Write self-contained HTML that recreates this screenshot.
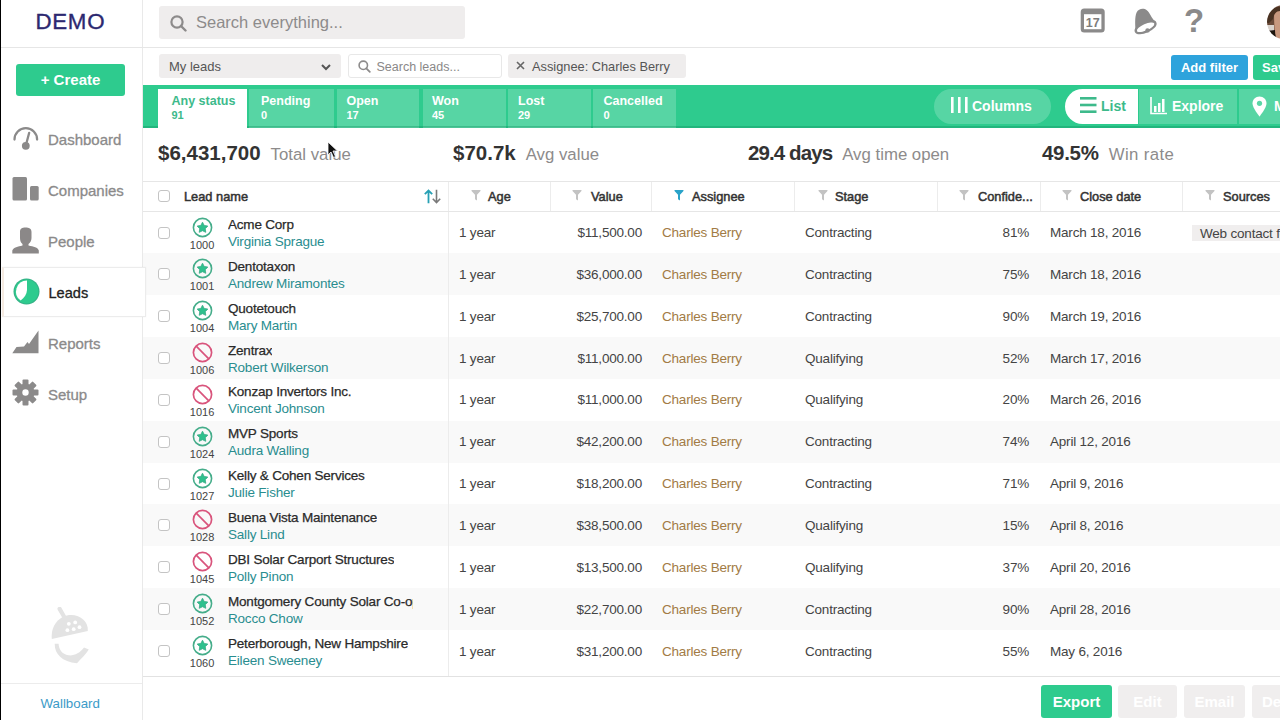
<!DOCTYPE html>
<html><head><meta charset="utf-8"><style>
*{box-sizing:border-box;margin:0;padding:0}
html,body{width:1280px;height:720px;overflow:hidden;background:#fff;font-family:"Liberation Sans",sans-serif;color:#333}
.abs{position:absolute}
#edge{position:absolute;left:0;top:0;width:1.3px;height:720px;background:#000;z-index:10}
#side{position:absolute;left:0;top:0;width:143px;height:720px;border-right:1px solid #e9e9e9;background:#fff;z-index:5}
#hline{position:absolute;left:0;top:47px;width:1280px;height:1px;background:#e6e6e6;z-index:6}
.demo{position:absolute;left:35.5px;top:8.5px;font-size:22.3px;color:#2c2870;letter-spacing:0.7px;-webkit-text-stroke:0.35px #2c2870}
.create{position:absolute;left:16px;top:64px;width:109px;height:32px;background:#2ecb8e;border-radius:3px;color:#fff;font-weight:700;font-size:15px;text-align:center;line-height:32px}
.nav{position:absolute;left:0;width:143px;height:50px}
.nav .t{position:absolute;left:48px;font-size:15px;color:#8b8a8a;-webkit-text-stroke:0.3px #8b8a8a}
.nav svg{position:absolute;left:12px}
.nav.active{left:1.5px;width:144.5px;background:#fff;border:1px solid #ececec;border-left:2px solid #f5ebe2;box-shadow:0 0 2px rgba(0,0,0,0.04)}
.wall{position:absolute;left:40.5px;top:696px;font-size:13.3px;color:#3b9bc8}
.search{position:absolute;left:159px;top:6px;width:306px;height:33px;background:#efeded;border-radius:3px}
.search .t{position:absolute;left:37px;top:7px;font-size:16.5px;color:#8d8b8b}
.ddl{position:absolute;left:159px;top:54.3px;width:182px;height:23.5px;background:#efeded;border-radius:3px}
.ddl .t{position:absolute;left:10px;top:4.5px;font-size:13px;color:#555}
.sl{position:absolute;left:347.5px;top:54.3px;width:154.5px;height:23.5px;background:#fff;border:1px solid #e8e8e8;border-radius:3px}
.sl .t{position:absolute;left:28px;top:4.5px;font-size:12.5px;color:#8a8888}
.chip{position:absolute;left:508px;top:54.3px;width:178px;height:23.5px;background:#efeded;border-radius:3px}
.chip .t{position:absolute;left:24px;top:4.5px;font-size:12.8px;color:#555}
.btn{position:absolute;top:55px;height:25px;border-radius:3px;color:#fff;font-weight:700;font-size:13px;line-height:25px;text-align:center}
#tabbar{position:absolute;left:143px;top:85px;width:1137px;height:42.5px;background:#2ecb8e;box-shadow:inset 0 -1.2px 0 #22b67e}
.tab{position:absolute;top:4px;height:38.5px;background:rgba(255,255,255,0.2);color:#fff;font-weight:700}
.tab .a{position:absolute;left:13.5px;top:5px;font-size:12.5px}
.tab .b{position:absolute;left:13.5px;top:20px;font-size:11px}
.tab.on{background:#fff;color:#3dba8b;z-index:2}
.tbl{position:absolute;left:0;top:41.3px;width:1137px;height:1.2px;background:rgba(20,150,100,0.35);z-index:1}
.pill{position:absolute;top:4px;height:35px;background:rgba(255,255,255,0.2);color:#fff;font-weight:700;font-size:14px}
.stat{position:absolute;top:141px;white-space:nowrap}
.stat b{font-size:20.5px;color:#333;font-weight:700}
.stat span{font-size:16.8px;color:#8d8b8b;margin-left:10px}
#thead{position:absolute;left:143px;top:181px;width:1137px;height:31px;border-top:1px solid #e6e6e6;border-bottom:1px solid #e6e6e6;background:#fff}
.th{position:absolute;top:0;height:29px;border-left:1px solid #ececec;font-size:12.8px;font-weight:400;color:#333;-webkit-text-stroke:0.5px #333}
.th .t{position:absolute;top:6.7px}
.th svg{position:absolute;top:9px}
#tbody{position:absolute;left:143px;top:0;width:1137px;height:676px;overflow:hidden}
.row{position:absolute;left:0;width:1137px;height:41.85px}
.cb{position:absolute;left:15.3px;width:12px;height:12px;border:1px solid #c4c4c4;border-radius:3px;background:#fff}
.icw{position:absolute;left:48.6px;top:5px;width:26px;text-align:center}
.icw .ic{position:absolute;left:0;top:0}
.num{position:absolute;left:-3px;top:22px;width:27px;text-align:center;font-size:11px;color:#444}
.lname{position:absolute;left:85px;top:5.5px;font-size:13.5px;letter-spacing:-0.2px;color:#2a2a2a;-webkit-text-stroke:0.25px #2a2a2a;white-space:nowrap;max-width:185px;overflow:hidden}
.pname{position:absolute;left:85px;top:22.5px;font-size:13.5px;letter-spacing:-0.2px;color:#298d8f;white-space:nowrap}
.vdiv{position:absolute;left:305px;top:0;width:1px;height:42px;background:#ececec}
.c{position:absolute;top:13.5px;font-size:13.5px;letter-spacing:-0.2px;color:#444;white-space:nowrap}
.age{left:316px}
.val{left:400px;width:99px;text-align:right}
.asg{left:519px;color:#a27b45}
.stg{left:662px}
.conf{left:800px;width:86px;text-align:right}
.cd{left:907px}
.src{left:1049px;top:13px}
.srcchip{display:inline-block;background:#f0eeee;padding:1px 8px;font-size:13.5px;letter-spacing:-0.2px;color:#444;height:16px;line-height:15px}
#bline{position:absolute;left:140px;top:675.5px;width:1140px;height:1.5px;background:#e2e2e2}
.bb{position:absolute;top:685px;height:33px;border-radius:3px;font-weight:700;font-size:15px;line-height:33px;text-align:center;color:#fff}
</style></head><body>
<div id="side">
  <div class="demo">DEMO</div>
  <div class="create">+ Create</div>
  <div class="nav" style="top:115px">
    <svg width="28" height="26" viewBox="0 0 28 26" style="top:11px"><path d="M2.5 13.5 A11.3 11.3 0 0 1 25.1 13.5" fill="none" stroke="#8b8a8a" stroke-width="2.3" stroke-linecap="round"/><path d="M17.2 6.8 L13.8 19.5" stroke="#8b8a8a" stroke-width="2.3" stroke-linecap="round"/><circle cx="13.8" cy="19.8" r="3.9" fill="#8b8a8a"/></svg>
    <div class="t" style="top:16px">Dashboard</div>
  </div>
  <div class="nav" style="top:166px">
    <svg width="28" height="26" viewBox="0 0 28 26" style="top:11px"><rect x="0.5" y="0" width="14.5" height="23.5" rx="1.5" fill="#8b8a8a"/><rect x="18" y="9" width="8.7" height="14.5" rx="1.5" fill="#8b8a8a"/></svg>
    <div class="t" style="top:16px">Companies</div>
  </div>
  <div class="nav" style="top:217px">
    <svg width="28" height="28" viewBox="0 0 28 28" style="top:9.5px"><path d="M8 5 C8 1.5 10 0.5 13.5 0.5 C17 0.5 19.5 1.5 19.5 5 L19.5 11 C19.5 14 18 16 16.5 17 L16.5 18.5 C21.5 19.5 26 20.5 26.8 23.5 L26.8 26.5 L0.3 26.5 L0.3 23.5 C1.5 20.5 6 19.5 10.5 18.5 L10.5 17 C9 16 8 14 8 11 Z" fill="#8b8888"/></svg>
    <div class="t" style="top:15.5px">People</div>
  </div>
  <div class="nav active" style="top:267px;height:50px">
    <svg width="28" height="28" viewBox="0 0 28 28" style="top:10px;left:9px"><circle cx="13.5" cy="13.5" r="13" fill="#35b186"/><circle cx="13.5" cy="13.5" r="11.9" fill="#2ecb8e"/><path d="M14 2.6 L14 12 C13.8 16 11.5 19.8 7.6 22.5 A11 11 0 0 1 14 2.6 Z" fill="#fff"/></svg>
    <div class="t" style="top:16.5px;left:45px;font-size:14.6px;color:#222;-webkit-text-stroke:0.3px #222">Leads</div>
  </div>
  <div class="nav" style="top:318px">
    <svg width="28" height="26" viewBox="0 0 28 26" style="top:12px;left:12px"><path d="M0.3 23.3 L4.5 17 L12 16.5 L15.5 12 L17 14 L26.5 0.5 L26.5 23.3 Z" fill="#8b8a8a"/></svg>
    <div class="t" style="top:17px">Reports</div>
  </div>
  <div class="nav" style="top:369px">
    <svg width="28" height="28" viewBox="0 0 28 28" style="top:10px"><g transform="translate(13.5,13.5)" fill="#8b8a8a"><circle r="9"/><rect x="-3" y="-13" width="6" height="6" rx="1"/><rect x="-3" y="7" width="6" height="6" rx="1"/><rect x="-13" y="-3" width="6" height="6" rx="1"/><rect x="7" y="-3" width="6" height="6" rx="1"/><g transform="rotate(45)"><rect x="-3" y="-13" width="6" height="6" rx="1"/><rect x="-3" y="7" width="6" height="6" rx="1"/><rect x="-13" y="-3" width="6" height="6" rx="1"/><rect x="7" y="-3" width="6" height="6" rx="1"/></g></g><circle cx="13.5" cy="13.5" r="3.2" fill="#fff"/></svg>
    <div class="t" style="top:17px">Setup</div>
  </div>
  <svg class="abs" style="left:50px;top:607px" width="40" height="58" viewBox="0 0 40 58"><path d="M9.6 1.9 L14 9.5" stroke="#e3e3e3" stroke-width="4.2" stroke-linecap="round"/><path d="M1.8 32 C0.5 18 10 8 21 8 C31 8 38.5 15 37.8 24 Z" fill="#e3e3e3"/><g fill="#fff"><circle cx="18.8" cy="16.8" r="1.9"/><circle cx="25.2" cy="15.4" r="1.9"/><circle cx="29.5" cy="20.2" r="1.9"/><circle cx="17.4" cy="23.2" r="1.9"/><circle cx="23.7" cy="22.2" r="1.9"/></g><path d="M4.7 36.8 C4.5 47 12 55 27 56.2 C31 52 36 47 38.8 42.6 L34 40.5 C30 46 24 49 18.5 48.3 C12 47.5 8.8 42 8.6 36.8 Z" fill="#e3e3e3"/></svg>
  <div class="abs" style="left:0;top:683px;width:142px;height:1px;background:#ececec"></div>
  <div class="wall">Wallboard</div>
</div>
<div id="edge"></div>
<div id="hline"></div>

<div class="search">
  <svg class="abs" style="left:11px;top:9px" width="17" height="17" viewBox="0 0 17 17"><circle cx="7" cy="7" r="5.6" fill="none" stroke="#8d8b8b" stroke-width="2.2"/><path d="M11 11 L15.5 15.5" stroke="#8d8b8b" stroke-width="2.4" stroke-linecap="round"/></svg>
  <div class="t">Search everything...</div>
</div>
<svg class="abs" style="left:1080px;top:8px" width="26" height="26" viewBox="0 0 26 26"><rect x="0.7" y="0.5" width="24" height="24" rx="3.5" fill="#8b8a8a"/><rect x="4" y="6.2" width="17.4" height="15" fill="#fff"/><text x="12.8" y="18.9" font-family="Liberation Sans" font-size="12.5" font-weight="700" fill="#7d7c7c" text-anchor="middle">17</text></svg>
<svg class="abs" style="left:1125px;top:4px" width="40" height="34" viewBox="0 0 40 34"><path d="M10.6 27.5 C10.2 21 9.6 13 11.6 8.6 C13.6 4.5 18.5 3.8 21.8 6.2 C25 8.6 26.2 14 30.6 18 Z" fill="#8b8a8a"/><ellipse cx="20.6" cy="23.2" rx="10.6" ry="4.4" transform="rotate(-24 20.6 23.2)" fill="none" stroke="#8b8a8a" stroke-width="2.4"/><ellipse cx="20.6" cy="23.2" rx="9.4" ry="3.2" transform="rotate(-24 20.6 23.2)" fill="#fff"/><circle cx="22.5" cy="26.4" r="2.2" fill="#8b8a8a"/></svg>
<div class="abs" style="left:1184px;top:3px;font-size:33px;font-weight:700;color:#8b8a8a;line-height:36px">?</div>
<svg class="abs" style="left:1266px;top:5px" width="14" height="34" viewBox="0 0 14 34"><defs><clipPath id="av"><circle cx="18" cy="17" r="17"/></clipPath><filter id="bl"><feGaussianBlur stdDeviation="0.7"/></filter></defs><g clip-path="url(#av)"><g filter="url(#bl)"><rect x="0" y="0" width="14" height="34" fill="#6a4a38"/><path d="M8 6 C10 5 13 5 14 5 L14 34 L9 34 C9 28 8 20 8 6 Z" fill="#c8987e"/><path d="M0 20 L8 20 L8 26 L0 26 Z" fill="#d9d2cc"/><path d="M0 26 L9 25 C9 30 10 33 12 34 L0 34 Z" fill="#1e1410"/><path d="M0 6 C3 3 8 2 14 2 L14 6 C10 6 8 9 7 14 L3 18 L0 18 Z" fill="#4a3020"/></g></g></svg>
<div class="ddl"><div class="t">My leads</div><svg class="abs" style="left:161.5px;top:9.5px" width="10" height="7" viewBox="0 0 10 7"><path d="M1 1 L5 5 L9 1" fill="none" stroke="#555" stroke-width="2"/></svg></div>
<div class="sl"><svg class="abs" style="left:9px;top:5px" width="13" height="13" viewBox="0 0 13 13"><circle cx="5.3" cy="5.3" r="4.2" fill="none" stroke="#8d8b8b" stroke-width="1.6"/><path d="M8.3 8.3 L11.8 11.8" stroke="#8d8b8b" stroke-width="1.8" stroke-linecap="round"/></svg><div class="t">Search leads...</div></div>
<div class="chip"><svg class="abs" style="left:8px;top:7px" width="9" height="9" viewBox="0 0 9 9"><path d="M1 1 L8 8 M8 1 L1 8" stroke="#666" stroke-width="1.6"/></svg><div class="t">Assignee: Charles Berry</div></div>
<div class="btn" style="left:1171px;width:77px;background:#2ea3dc">Add filter</div>
<div class="btn" style="left:1253px;width:60px;background:#2ecb8e;text-align:left;padding-left:9px">Save</div>

<div id="tabbar">
  <div class="tbl"></div><div class="tab on" style="left:15px;width:89px"><div class="a">Any status</div><div class="b">91</div></div>
  <div class="tab" style="left:105.5px;width:85px"><div class="a" style="left:12.5px">Pending</div><div class="b" style="left:12.5px">0</div></div>
  <div class="tab" style="left:193.5px;width:82.5px"><div class="a" style="left:10px">Open</div><div class="b" style="left:10px">17</div></div>
  <div class="tab" style="left:279.5px;width:83px"><div class="a" style="left:9.5px">Won</div><div class="b" style="left:9.5px">45</div></div>
  <div class="tab" style="left:365px;width:82.5px"><div class="a" style="left:10px">Lost</div><div class="b" style="left:10px">29</div></div>
  <div class="tab" style="left:450px;width:83px"><div class="a" style="left:10.5px">Cancelled</div><div class="b" style="left:10.5px">0</div></div>
  <div class="pill" style="left:791px;width:117px;border-radius:18px">
    <svg class="abs" style="left:17px;top:8px" width="17" height="16" viewBox="0 0 17 16"><rect x="0" y="0" width="2.6" height="16" fill="#fff"/><rect x="7" y="0" width="2.6" height="16" fill="#fff"/><rect x="14" y="0" width="2.6" height="16" fill="#fff"/></svg>
    <div class="abs" style="left:38px;top:9px">Columns</div>
  </div>
  <div class="pill" style="left:922px;width:73px;border-radius:18px 0 0 18px;background:#fff;color:#3dba8b">
    <svg class="abs" style="left:15px;top:8px" width="17" height="16" viewBox="0 0 17 16"><rect x="0" y="0" width="16.5" height="2.6" fill="#3dba8b"/><rect x="0" y="6.7" width="16.5" height="2.6" fill="#3dba8b"/><rect x="0" y="13.4" width="16.5" height="2.6" fill="#3dba8b"/></svg>
    <div class="abs" style="left:36px;top:9px">List</div>
  </div>
  <div class="pill" style="left:996px;width:98px;border-radius:0">
    <svg class="abs" style="left:11px;top:8px" width="18" height="18" viewBox="0 0 18 18"><path d="M1 0 V16.5 H17" fill="none" stroke="#fff" stroke-width="1.6"/><rect x="4" y="9" width="2.5" height="6" fill="#fff"/><rect x="8" y="6" width="2.5" height="9" fill="#fff"/><rect x="12" y="2" width="2.5" height="13" fill="#fff"/></svg>
    <div class="abs" style="left:33px;top:9px">Explore</div>
  </div>
  <div class="pill" style="left:1096px;width:60px;border-radius:0">
    <svg class="abs" style="left:13px;top:7px" width="15" height="21" viewBox="0 0 15 21"><path d="M7.5 0.5 C3.5 0.5 0.5 3.5 0.5 7.5 C0.5 12 7.5 20.5 7.5 20.5 C7.5 20.5 14.5 12 14.5 7.5 C14.5 3.5 11.5 0.5 7.5 0.5 Z" fill="#fff"/><circle cx="7.5" cy="7.3" r="2.6" fill="#5ad6a6"/></svg>
    <div class="abs" style="left:35px;top:9px">Map</div>
  </div>
</div>

<div class="stat" style="left:158px"><b>$6,431,700</b><span>Total value</span></div>
<div class="stat" style="left:453px"><b>$70.7k</b><span>Avg value</span></div>
<div class="stat" style="left:748px"><b style="letter-spacing:-0.9px">29.4 days</b><span>Avg time open</span></div>
<div class="stat" style="left:1042px"><b style="letter-spacing:-0.3px">49.5%</b><span style="letter-spacing:0.4px">Win rate</span></div>
<svg class="abs" style="left:327px;top:141px" width="12" height="18" viewBox="0 0 12 18"><path d="M1 1 L1 14 L4 11 L6.5 16.5 L8.5 15.5 L6 10 L10.5 10 Z" fill="#111" stroke="#fff" stroke-width="0.8"/></svg>

<div id="tbody">
<div class="row" style="top:211.50px;background:#ffffff">
<div class="cb" style="top:15px"></div>
<div class="icw"><svg class="ic" width="21" height="21" viewBox="0 0 21 21"><circle cx="10.5" cy="10.5" r="9.1" fill="none" stroke="#45ad8a" stroke-width="1.6"/><path d="M10.50 5.20 L12.20 8.45 L15.83 9.07 L13.26 11.70 L13.79 15.33 L10.50 13.70 L7.21 15.33 L7.74 11.70 L5.17 9.07 L8.80 8.45 Z" fill="#2fc08d" stroke="#38a985" stroke-width="0.8" stroke-linejoin="round"/></svg><div class="num">1000</div></div>
<div class="lname">Acme Corp</div><div class="pname">Virginia Sprague</div>
<div class="c age">1 year</div>
<div class="c val">$11,500.00</div>
<div class="c asg">Charles Berry</div>
<div class="c stg">Contracting</div>
<div class="c conf">81%</div>
<div class="c cd">March 18, 2016</div>
<div class="c src"><span class="srcchip">Web contact form</span></div>
</div><div class="row" style="top:253.35px;background:#f9f9f9">
<div class="cb" style="top:15px"></div>
<div class="icw"><svg class="ic" width="21" height="21" viewBox="0 0 21 21"><circle cx="10.5" cy="10.5" r="9.1" fill="none" stroke="#45ad8a" stroke-width="1.6"/><path d="M10.50 5.20 L12.20 8.45 L15.83 9.07 L13.26 11.70 L13.79 15.33 L10.50 13.70 L7.21 15.33 L7.74 11.70 L5.17 9.07 L8.80 8.45 Z" fill="#2fc08d" stroke="#38a985" stroke-width="0.8" stroke-linejoin="round"/></svg><div class="num">1001</div></div>
<div class="lname">Dentotaxon</div><div class="pname">Andrew Miramontes</div>
<div class="c age">1 year</div>
<div class="c val">$36,000.00</div>
<div class="c asg">Charles Berry</div>
<div class="c stg">Contracting</div>
<div class="c conf">75%</div>
<div class="c cd">March 18, 2016</div>
<div class="c src"></div>
</div><div class="row" style="top:295.20px;background:#ffffff">
<div class="cb" style="top:15px"></div>
<div class="icw"><svg class="ic" width="21" height="21" viewBox="0 0 21 21"><circle cx="10.5" cy="10.5" r="9.1" fill="none" stroke="#45ad8a" stroke-width="1.6"/><path d="M10.50 5.20 L12.20 8.45 L15.83 9.07 L13.26 11.70 L13.79 15.33 L10.50 13.70 L7.21 15.33 L7.74 11.70 L5.17 9.07 L8.80 8.45 Z" fill="#2fc08d" stroke="#38a985" stroke-width="0.8" stroke-linejoin="round"/></svg><div class="num">1004</div></div>
<div class="lname">Quotetouch</div><div class="pname">Mary Martin</div>
<div class="c age">1 year</div>
<div class="c val">$25,700.00</div>
<div class="c asg">Charles Berry</div>
<div class="c stg">Contracting</div>
<div class="c conf">90%</div>
<div class="c cd">March 19, 2016</div>
<div class="c src"></div>
</div><div class="row" style="top:337.05px;background:#f9f9f9">
<div class="cb" style="top:15px"></div>
<div class="icw"><svg class="ic" width="21" height="21" viewBox="0 0 21 21"><circle cx="10.5" cy="10.5" r="9.1" fill="none" stroke="#d9547c" stroke-width="1.7"/><line x1="4.2" y1="4.2" x2="16.8" y2="16.8" stroke="#d9547c" stroke-width="1.7"/></svg><div class="num">1006</div></div>
<div class="lname">Zentrax</div><div class="pname">Robert Wilkerson</div>
<div class="c age">1 year</div>
<div class="c val">$11,000.00</div>
<div class="c asg">Charles Berry</div>
<div class="c stg">Qualifying</div>
<div class="c conf">52%</div>
<div class="c cd">March 17, 2016</div>
<div class="c src"></div>
</div><div class="row" style="top:378.90px;background:#ffffff">
<div class="cb" style="top:15px"></div>
<div class="icw"><svg class="ic" width="21" height="21" viewBox="0 0 21 21"><circle cx="10.5" cy="10.5" r="9.1" fill="none" stroke="#d9547c" stroke-width="1.7"/><line x1="4.2" y1="4.2" x2="16.8" y2="16.8" stroke="#d9547c" stroke-width="1.7"/></svg><div class="num">1016</div></div>
<div class="lname">Konzap Invertors Inc.</div><div class="pname">Vincent Johnson</div>
<div class="c age">1 year</div>
<div class="c val">$11,000.00</div>
<div class="c asg">Charles Berry</div>
<div class="c stg">Qualifying</div>
<div class="c conf">20%</div>
<div class="c cd">March 26, 2016</div>
<div class="c src"></div>
</div><div class="row" style="top:420.75px;background:#f9f9f9">
<div class="cb" style="top:15px"></div>
<div class="icw"><svg class="ic" width="21" height="21" viewBox="0 0 21 21"><circle cx="10.5" cy="10.5" r="9.1" fill="none" stroke="#45ad8a" stroke-width="1.6"/><path d="M10.50 5.20 L12.20 8.45 L15.83 9.07 L13.26 11.70 L13.79 15.33 L10.50 13.70 L7.21 15.33 L7.74 11.70 L5.17 9.07 L8.80 8.45 Z" fill="#2fc08d" stroke="#38a985" stroke-width="0.8" stroke-linejoin="round"/></svg><div class="num">1024</div></div>
<div class="lname">MVP Sports</div><div class="pname">Audra Walling</div>
<div class="c age">1 year</div>
<div class="c val">$42,200.00</div>
<div class="c asg">Charles Berry</div>
<div class="c stg">Contracting</div>
<div class="c conf">74%</div>
<div class="c cd">April 12, 2016</div>
<div class="c src"></div>
</div><div class="row" style="top:462.60px;background:#ffffff">
<div class="cb" style="top:15px"></div>
<div class="icw"><svg class="ic" width="21" height="21" viewBox="0 0 21 21"><circle cx="10.5" cy="10.5" r="9.1" fill="none" stroke="#45ad8a" stroke-width="1.6"/><path d="M10.50 5.20 L12.20 8.45 L15.83 9.07 L13.26 11.70 L13.79 15.33 L10.50 13.70 L7.21 15.33 L7.74 11.70 L5.17 9.07 L8.80 8.45 Z" fill="#2fc08d" stroke="#38a985" stroke-width="0.8" stroke-linejoin="round"/></svg><div class="num">1027</div></div>
<div class="lname">Kelly &amp; Cohen Services</div><div class="pname">Julie Fisher</div>
<div class="c age">1 year</div>
<div class="c val">$18,200.00</div>
<div class="c asg">Charles Berry</div>
<div class="c stg">Contracting</div>
<div class="c conf">71%</div>
<div class="c cd">April 9, 2016</div>
<div class="c src"></div>
</div><div class="row" style="top:504.45px;background:#f9f9f9">
<div class="cb" style="top:15px"></div>
<div class="icw"><svg class="ic" width="21" height="21" viewBox="0 0 21 21"><circle cx="10.5" cy="10.5" r="9.1" fill="none" stroke="#d9547c" stroke-width="1.7"/><line x1="4.2" y1="4.2" x2="16.8" y2="16.8" stroke="#d9547c" stroke-width="1.7"/></svg><div class="num">1028</div></div>
<div class="lname">Buena Vista Maintenance</div><div class="pname">Sally Lind</div>
<div class="c age">1 year</div>
<div class="c val">$38,500.00</div>
<div class="c asg">Charles Berry</div>
<div class="c stg">Qualifying</div>
<div class="c conf">15%</div>
<div class="c cd">April 8, 2016</div>
<div class="c src"></div>
</div><div class="row" style="top:546.30px;background:#ffffff">
<div class="cb" style="top:15px"></div>
<div class="icw"><svg class="ic" width="21" height="21" viewBox="0 0 21 21"><circle cx="10.5" cy="10.5" r="9.1" fill="none" stroke="#d9547c" stroke-width="1.7"/><line x1="4.2" y1="4.2" x2="16.8" y2="16.8" stroke="#d9547c" stroke-width="1.7"/></svg><div class="num">1045</div></div>
<div class="lname">DBI Solar Carport Structures</div><div class="pname">Polly Pinon</div>
<div class="c age">1 year</div>
<div class="c val">$13,500.00</div>
<div class="c asg">Charles Berry</div>
<div class="c stg">Qualifying</div>
<div class="c conf">37%</div>
<div class="c cd">April 20, 2016</div>
<div class="c src"></div>
</div><div class="row" style="top:588.15px;background:#f9f9f9">
<div class="cb" style="top:15px"></div>
<div class="icw"><svg class="ic" width="21" height="21" viewBox="0 0 21 21"><circle cx="10.5" cy="10.5" r="9.1" fill="none" stroke="#45ad8a" stroke-width="1.6"/><path d="M10.50 5.20 L12.20 8.45 L15.83 9.07 L13.26 11.70 L13.79 15.33 L10.50 13.70 L7.21 15.33 L7.74 11.70 L5.17 9.07 L8.80 8.45 Z" fill="#2fc08d" stroke="#38a985" stroke-width="0.8" stroke-linejoin="round"/></svg><div class="num">1052</div></div>
<div class="lname">Montgomery County Solar Co-op</div><div class="pname">Rocco Chow</div>
<div class="c age">1 year</div>
<div class="c val">$22,700.00</div>
<div class="c asg">Charles Berry</div>
<div class="c stg">Contracting</div>
<div class="c conf">90%</div>
<div class="c cd">April 28, 2016</div>
<div class="c src"></div>
</div><div class="row" style="top:630.00px;background:#ffffff">
<div class="cb" style="top:15px"></div>
<div class="icw"><svg class="ic" width="21" height="21" viewBox="0 0 21 21"><circle cx="10.5" cy="10.5" r="9.1" fill="none" stroke="#45ad8a" stroke-width="1.6"/><path d="M10.50 5.20 L12.20 8.45 L15.83 9.07 L13.26 11.70 L13.79 15.33 L10.50 13.70 L7.21 15.33 L7.74 11.70 L5.17 9.07 L8.80 8.45 Z" fill="#2fc08d" stroke="#38a985" stroke-width="0.8" stroke-linejoin="round"/></svg><div class="num">1060</div></div>
<div class="lname">Peterborough, New Hampshire</div><div class="pname">Eileen Sweeney</div>
<div class="c age">1 year</div>
<div class="c val">$31,200.00</div>
<div class="c asg">Charles Berry</div>
<div class="c stg">Contracting</div>
<div class="c conf">55%</div>
<div class="c cd">May 6, 2016</div>
<div class="c src"></div>
</div><div class="row" style="top:671.85px;background:#ffffff">
<div class="cb" style="top:15px"></div>
<div class="icw"><svg class="ic" width="21" height="21" viewBox="0 0 21 21"><circle cx="10.5" cy="10.5" r="9.1" fill="none" stroke="#45ad8a" stroke-width="1.6"/><path d="M10.50 5.20 L12.20 8.45 L15.83 9.07 L13.26 11.70 L13.79 15.33 L10.50 13.70 L7.21 15.33 L7.74 11.70 L5.17 9.07 L8.80 8.45 Z" fill="#2fc08d" stroke="#38a985" stroke-width="0.8" stroke-linejoin="round"/></svg><div class="num">1061</div></div>
<div class="lname">Bishop Solar</div><div class="pname">Nancy Drew</div>
<div class="c age">1 year</div>
<div class="c val">$12,000.00</div>
<div class="c asg">Charles Berry</div>
<div class="c stg">Contracting</div>
<div class="c conf">60%</div>
<div class="c cd">May 9, 2016</div>
<div class="c src"></div>
</div>
<div class="vdiv" style="left:305px;top:211px;height:465px"></div>
</div>
<div id="thead">
  <div class="cb" style="left:15.3px;top:8px"></div>
  <div class="th" style="left:0;width:305px;border-left:none"><div class="t" style="left:41px">Lead name</div>
    <svg class="abs" style="left:281px;top:7px" width="18" height="15" viewBox="0 0 18 15"><path d="M4.5 14.2 V1.5 M0.8 5.2 L4.5 1.5 L8.2 5.2" fill="none" stroke="#27a0b4" stroke-width="1.8"/><path d="M12.5 0.8 V13.5 M8.8 9.8 L12.5 13.5 L16.2 9.8" fill="none" stroke="#7a7a7a" stroke-width="1.6"/></svg></div>
  <div class="th" style="left:305px;width:102px"><svg style="position:absolute;left:21.5px;top:8.3px" width="10" height="11" viewBox="0 0 10 11"><path d="M0.3 0.8 Q0.3 0 1.3 0 H8.7 Q9.7 0 9.7 0.8 L6 4.8 V10.5 L4 9.3 V4.8 Z" fill="#c3c3c3"/></svg><div class="t" style="left:39px">Age</div></div>
  <div class="th" style="left:407px;width:101px"><svg style="position:absolute;left:20.5px;top:8.3px" width="10" height="11" viewBox="0 0 10 11"><path d="M0.3 0.8 Q0.3 0 1.3 0 H8.7 Q9.7 0 9.7 0.8 L6 4.8 V10.5 L4 9.3 V4.8 Z" fill="#c3c3c3"/></svg><div class="t" style="left:40px">Value</div></div>
  <div class="th" style="left:508px;width:143px"><svg style="position:absolute;left:21.5px;top:8.3px" width="10" height="11" viewBox="0 0 10 11"><path d="M0.3 0.8 Q0.3 0 1.3 0 H8.7 Q9.7 0 9.7 0.8 L6 4.8 V10.5 L4 9.3 V4.8 Z" fill="#2aa3c9"/></svg><div class="t" style="left:40px">Assignee</div></div>
  <div class="th" style="left:651px;width:143px"><svg style="position:absolute;left:22.5px;top:8.3px" width="10" height="11" viewBox="0 0 10 11"><path d="M0.3 0.8 Q0.3 0 1.3 0 H8.7 Q9.7 0 9.7 0.8 L6 4.8 V10.5 L4 9.3 V4.8 Z" fill="#c3c3c3"/></svg><div class="t" style="left:40px">Stage</div></div>
  <div class="th" style="left:794px;width:103px"><svg style="position:absolute;left:20.5px;top:8.3px" width="10" height="11" viewBox="0 0 10 11"><path d="M0.3 0.8 Q0.3 0 1.3 0 H8.7 Q9.7 0 9.7 0.8 L6 4.8 V10.5 L4 9.3 V4.8 Z" fill="#c3c3c3"/></svg><div class="t" style="left:40px">Confide...</div></div>
  <div class="th" style="left:897px;width:142px"><svg style="position:absolute;left:20.5px;top:8.3px" width="10" height="11" viewBox="0 0 10 11"><path d="M0.3 0.8 Q0.3 0 1.3 0 H8.7 Q9.7 0 9.7 0.8 L6 4.8 V10.5 L4 9.3 V4.8 Z" fill="#c3c3c3"/></svg><div class="t" style="left:39px">Close date</div></div>
  <div class="th" style="left:1039px;width:200px"><svg style="position:absolute;left:21.5px;top:8.3px" width="10" height="11" viewBox="0 0 10 11"><path d="M0.3 0.8 Q0.3 0 1.3 0 H8.7 Q9.7 0 9.7 0.8 L6 4.8 V10.5 L4 9.3 V4.8 Z" fill="#c3c3c3"/></svg><div class="t" style="left:40px">Sources</div></div>
</div>
<div id="bline"></div>
<div class="bb" style="left:1041px;width:71px;background:#2ecb8e">Export</div>
<div class="bb" style="left:1118px;width:59px;background:#f0eeee">Edit</div>
<div class="bb" style="left:1184px;width:61px;background:#f0eeee">Email</div>
<div class="bb" style="left:1252px;width:70px;background:#f0eeee;text-align:left;padding-left:10px">Delete</div>
</body></html>
